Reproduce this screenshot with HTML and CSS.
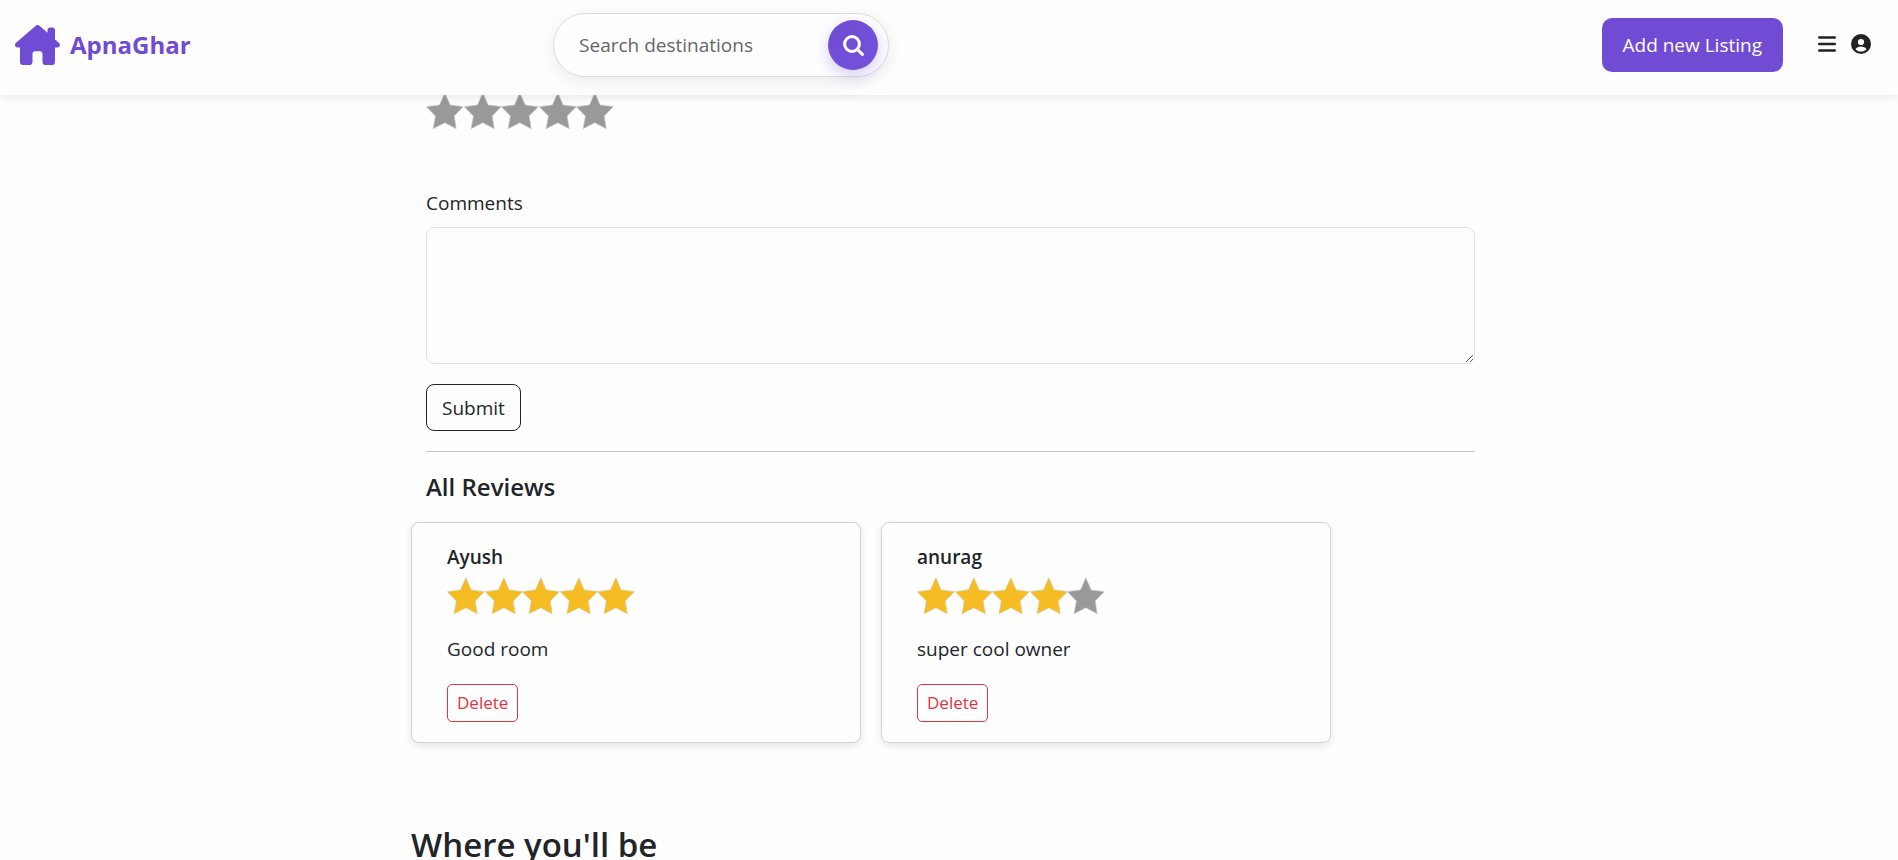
FILE: index.html
```html
<!DOCTYPE html>
<html lang="en">
<head>
<meta charset="utf-8">
<title>ApnaGhar</title>
<link rel="stylesheet" href="styles.css">
</head>
<body>
<svg class="symbols" aria-hidden="true">
  <symbol id="star" viewBox="0 0 112 112"><path d="M56 2 72 38 111 43 84 71 90 109 56 91 21 109 28 71 1 43 40 38Z"/></symbol>
</svg>

<header class="navbar">
  <a class="brand" href="#">
    <svg class="brand-icon" viewBox="0 0 576 512" aria-hidden="true"><path d="M575.8 255.500c0 18-15 32.100-32 32.100h-32V472c0 22.100-17.900 40-40 40h-80c-22.100 0-40-17.900-40-40v-104c0-17.700-14.300-32-32-32h-64c-17.700 0-32 14.300-32 32v104c0 22.100-17.900 40-40 40h-80c-22.100 0-40-17.900-40-40V287.600h-32c-18 0-32-14-32-32.100 0-9 3-17 10-24L266.400 8c7-7 15-8 22-8s15 2 21 7L416 100.700V64c0-17.700 14.300-32 32-32h32c17.700 0 32 14.300 32 32v121l52.800 46.500c8 7 12 15 11 24z"/></svg>
    <span>ApnaGhar</span>
  </a>
  <form class="search" role="search">
    <input class="search-input" type="search" placeholder="Search destinations" aria-label="Search destinations">
    <button class="search-button" type="button" aria-label="Search">
      <svg class="search-icon" viewBox="0 0 21 21" aria-hidden="true"><circle cx="9" cy="9" r="7.400"/><path d="M14.500 14.500 19.400 19.400"/></svg>
    </button>
  </form>
  <nav class="actions">
    <a class="add-listing" href="#">Add new Listing</a>
    <button class="account" type="button" aria-label="Account menu">
      <svg class="menu-icon" viewBox="0 0 18 16" aria-hidden="true"><path d="M1.200 1.500h15.600M1.200 8h15.600M1.200 14.500h15.600"/></svg>
      <svg class="user-icon" viewBox="0 0 20 20" aria-hidden="true"><circle class="user-disc" cx="10" cy="10" r="10"/><circle class="user-cut" cx="10" cy="8" r="3.100"/><path class="user-cut" d="M4.500 15.200C5.600 13.400 7.500 12.500 10 12.500s4.400.9 5.500 2.700C14 16.700 12.100 17.500 10 17.500s-4-.8-5.500-2.300Z"/></svg>
    </button>
  </nav>
</header>

<main class="page">
  <div class="content">
    <form class="review-form">
      <fieldset class="rating stars" aria-label="Rating">
        <label class="star"><input class="hidden" type="radio" name="rating" value="1" aria-label="1 star"><svg><use href="#star"/></svg></label>
        <label class="star"><input class="hidden" type="radio" name="rating" value="2" aria-label="2 stars"><svg><use href="#star"/></svg></label>
        <label class="star"><input class="hidden" type="radio" name="rating" value="3" aria-label="3 stars"><svg><use href="#star"/></svg></label>
        <label class="star"><input class="hidden" type="radio" name="rating" value="4" aria-label="4 stars"><svg><use href="#star"/></svg></label>
        <label class="star"><input class="hidden" type="radio" name="rating" value="5" aria-label="5 stars"><svg><use href="#star"/></svg></label>
      </fieldset>
      <label class="comment-label" for="comment">Comments</label>
      <textarea class="comment" id="comment" name="comment"></textarea>
      <button class="submit" type="button">Submit</button>
    </form>
    <hr class="divider">
    <h4 class="reviews-title">All Reviews</h4>
    <div class="reviews">
      <article class="card">
        <h5 class="author">Ayush</h5>
        <div class="stars" role="img" aria-label="5 of 5 stars">
          <span class="star on"><svg><use href="#star"/></svg></span><span class="star on"><svg><use href="#star"/></svg></span><span class="star on"><svg><use href="#star"/></svg></span><span class="star on"><svg><use href="#star"/></svg></span><span class="star on"><svg><use href="#star"/></svg></span>
        </div>
        <p class="review-text">Good room</p>
        <button class="delete" type="button">Delete</button>
      </article>
      <article class="card">
        <h5 class="author">anurag</h5>
        <div class="stars" role="img" aria-label="4 of 5 stars">
          <span class="star on"><svg><use href="#star"/></svg></span><span class="star on"><svg><use href="#star"/></svg></span><span class="star on"><svg><use href="#star"/></svg></span><span class="star on"><svg><use href="#star"/></svg></span><span class="star"><svg><use href="#star"/></svg></span>
        </div>
        <p class="review-text">super cool owner</p>
        <button class="delete" type="button">Delete</button>
      </article>
    </div>
    <h3 class="map-title">Where you'll be</h3>
  </div>
</main>
</body>
</html>
```
FILE: styles.css
```css
* { box-sizing: border-box; }

body {
  margin: 0;
  height: 100vh;
  display: flex;
  flex-direction: column;
  overflow: hidden;
  background: #fefefe;
  color: #212529;
  font-family: "Open Sans", "Noto Sans", sans-serif;
  font-size: 19px;
  line-height: 30px;
}

button, input, textarea { font: inherit; color: inherit; }
h3, h4, h5, p { margin: 0; }
.symbols { display: none; }

.hidden {
  position: absolute;
  width: 1px;
  height: 1px;
  margin: 0;
  padding: 0;
  overflow: hidden;
  clip-path: inset(50%);
}

.navbar {
  position: relative;
  z-index: 1;
  flex: none;
  display: grid;
  grid-template-columns: 354fr auto 646fr;
  align-items: start;
  padding: 13px 27px 18px 15px;
  background: #fefefe;
  box-shadow: 0 2px 10px rgba(0, 0, 0, 0.1);
}

.brand {
  display: flex;
  align-items: center;
  gap: 10px;
  height: 64px;
  color: #704bd4;
  font-size: 24px;
  font-weight: 700;
  text-decoration: none;
}
.brand-icon { width: 45px; height: 40px; fill: currentColor; }

.search {
  display: flex;
  align-items: center;
  width: 336px;
  height: 64px;
  padding: 0 10px 0 25px;
  background: #fefefe;
  border: 1px solid #ddd;
  border-radius: 32px;
  box-shadow: 0 5px 20px rgba(0, 0, 0, 0.08);
}
.search-input {
  flex: 1;
  min-width: 0;
  padding: 0;
  border: 0;
  outline: 0;
  background: transparent;
}
.search-input::placeholder { color: #63666a; opacity: 1; }
.search-button {
  display: grid;
  place-items: center;
  width: 50px;
  height: 50px;
  padding: 0;
  border: 0;
  border-radius: 50%;
  background: linear-gradient(135deg, #704bd4, #7352da);
  box-shadow: 0 5px 15px rgba(112, 75, 212, 0.3);
}
.search-icon {
  width: 21px;
  height: 21px;
  fill: none;
  stroke: #fff;
  stroke-width: 3;
  stroke-linecap: round;
}

.actions {
  display: flex;
  justify-content: flex-end;
  align-items: flex-start;
  gap: 35px;
  padding-top: 5px;
}
.add-listing {
  padding: 12px 21px;
  border-radius: 10px;
  background: #704bd4;
  color: #fff;
  text-decoration: none;
}
.account {
  display: flex;
  align-items: center;
  gap: 15px;
  height: 51px;
  padding: 0;
  border: 0;
  background: none;
}
.menu-icon { width: 18px; height: 16px; stroke: #222; stroke-width: 2.400; stroke-linecap: round; }
.user-icon { width: 20px; height: 20px; }
.user-disc { fill: #222; }
.user-cut { fill: #fff; }

.page { flex: 1; min-height: 0; padding-left: 3px; overflow: hidden; }
.content { max-width: 1079px; margin: 0 auto; }

.review-form { padding: 0 15px; }
.stars { display: flex; width: 188px; height: 38px; }
.rating { margin: -3px 0 58px; padding: 0; border: 0; }
.star { flex: 1; fill: #999; stroke: #c9c9c9; stroke-width: 2; }
.star.on { fill: #f5bc24; stroke: #d9c692; }
.star svg { display: block; width: 100%; height: 100%; }

.comment-label { display: block; margin-bottom: 9px; }
.comment {
  display: block;
  width: 100%;
  height: 137px;
  padding: 8px 15px;
  border: 1px solid #dee2e6;
  border-radius: 8px;
  background: #fefefe;
  resize: vertical;
}
.submit {
  margin-top: 20px;
  height: 47px;
  padding: 0 15px;
  border: 1px solid #212529;
  border-radius: 8px;
  background: transparent;
}
.divider { margin: 20px 15px; border: 0; border-top: 1px solid #c7c8c9; }
.reviews-title {
  margin: 0 15px 20px;
  font-size: 24px;
  font-weight: 600;
}

.reviews { display: flex; gap: 20px; }
.card {
  flex: 0 1 450px;
  padding: 20px 35px;
  border: 1px solid #d3d3d4;
  border-radius: 8px;
  background: #fefefe;
  box-shadow: 0 3px 8px rgba(0, 0, 0, 0.1);
}
.author {
  margin-bottom: 6px;
  font-size: 19px;
  font-weight: 600;
  line-height: 28px;
}
.review-text { margin: 19px 0 20px; }
.delete {
  display: block;
  height: 38px;
  padding: 0 9px;
  border: 1px solid #dc3545;
  border-radius: 5px;
  background: transparent;
  color: #dc3545;
  font-size: 17px;
}
.map-title {
  margin-top: 81px;
  font-size: 33px;
  font-weight: 600;
  line-height: 42px;
}
```
